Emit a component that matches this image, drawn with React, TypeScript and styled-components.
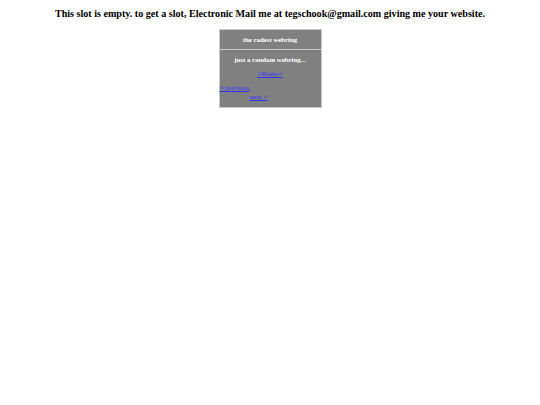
import React from 'react';
import styled, { createGlobalStyle } from 'styled-components';

const Global = createGlobalStyle`
  html, body {
    margin: 0;
    padding: 0;
    background: #ffffff;
    font-family: "Liberation Serif", "Times New Roman", serif;
  }
`;

const Page = styled.div`
  display: flex;
  flex-direction: column;
  align-items: center;
  padding-top: 8px;
`;

const Notice = styled.h3`
  margin: 0 0 9px;
  font-size: 10.1px;
  line-height: 12px;
  font-weight: bold;
  color: #000;
  text-align: center;
`;

const Ring = styled.div`
  width: 101px;
  background: #808080;
  border: 1px solid #c8c8c8;
  color: #fff;
  font-size: 6.8px;
  font-weight: bold;
`;

const RingHead = styled.div`
  height: 19px;
  display: flex;
  align-items: center;
  justify-content: center;
  border-bottom: 1px solid #c8c8c8;
`;

const RingBody = styled.div`
  display: flex;
  flex-direction: column;
  padding: 6px 0 6px;
`;

const Line = styled.div<{ $align?: 'left' | 'center'; $gap?: number; $indent?: number }>`
  text-align: ${({ $align }) => $align ?? 'center'};
  margin-bottom: ${({ $gap }) => $gap ?? 0}px;
  padding-left: ${({ $indent }) => $indent ?? 0}px;
  line-height: 8px;
`;

const RingLink = styled.a`
  color: #3333ff;
  font-weight: normal;
  font-size: 7px;
  text-decoration: underline;
`;

export default function App() {
  return (
    <>
      <Global />
      <Page>
        <Notice>
          This slot is empty. to get a slot, Electronic Mail me at tegschook@gmail.com giving me your website.
        </Notice>
        <Ring>
          <RingHead>the radest webring</RingHead>
          <RingBody>
            <Line $gap={6}>just a random webring...</Line>
            <Line $gap={6}>
              <RingLink href="#">&gt;Home&lt;</RingLink>
            </Line>
            <Line $align="left" $gap={1}>
              <RingLink href="#">&lt; previous</RingLink>
            </Line>
            <Line $align="left" $indent={30}>
              <RingLink href="#">next &gt;</RingLink>
            </Line>
          </RingBody>
        </Ring>
      </Page>
    </>
  );
}
